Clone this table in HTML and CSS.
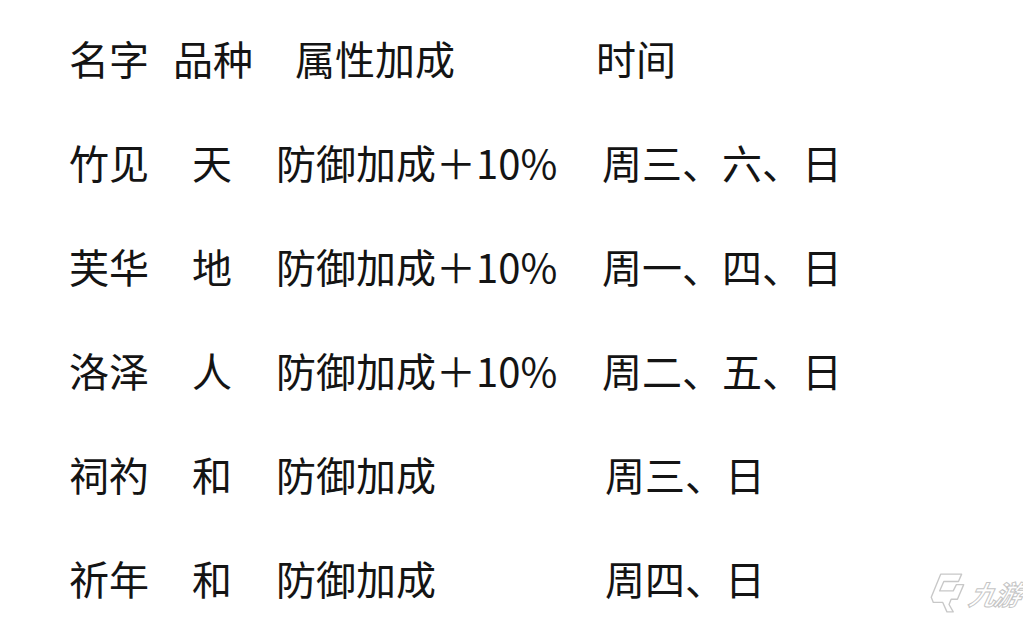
FILE: index.html
```html
<!DOCTYPE html>
<html lang="zh">
<head>
<meta charset="utf-8">
<link rel="stylesheet" href="styles.css">
</head>
<body>
<div class="table">
  <div class="row">
    <span class="c h1">名字</span><span class="c h2">品种</span><span class="c h3">属性加成</span><span class="c">时间</span>
  </div>
  <div class="row">
    <span class="c n">竹见</span><span class="c v">天</span><span class="c a">防御加成＋10%</span><span class="c">周三、六、日</span>
  </div>
  <div class="row">
    <span class="c n">芙华</span><span class="c v">地</span><span class="c a">防御加成＋10%</span><span class="c">周一、四、日</span>
  </div>
  <div class="row">
    <span class="c n">洛泽</span><span class="c v">人</span><span class="c a">防御加成＋10%</span><span class="c">周二、五、日</span>
  </div>
  <div class="row">
    <span class="c n">祠礿</span><span class="c v">和</span><span class="c a2">防御加成</span><span class="c">周三、日</span>
  </div>
  <div class="row">
    <span class="c n">祈年</span><span class="c v">和</span><span class="c a2">防御加成</span><span class="c">周四、日</span>
  </div>
</div>
<div class="logo">
  <svg class="logo-mark" width="36" height="44" viewBox="0 0 34 42">
    <path d="M10 3 L30 3 L27 10 L13 10 L9 19 L22 19 L25 13 L32 13 L26 27 L20 27 L18 32 L22 39 L16 39 L12 30 L3 30 L1 25 Z" fill="none" stroke="#c8c8c8" stroke-width="1.3" stroke-linejoin="round"/>
  </svg>
  <span class="logo-text">九游</span>
</div>
</body>
</html>
```

FILE: styles.css
```css
html, body {
  margin: 0;
  padding: 0;
  background: #ffffff;
}
body {
  width: 1023px;
  height: 623px;
  overflow: hidden;
  position: relative;
  font-family: "Noto Sans CJK SC", "Noto Sans", sans-serif;
  color: #141414;
}
.table {
  padding: 6px 0 0 69px;
  display: flex;
  flex-direction: column;
}
.row {
  display: flex;
  height: 104px;
  line-height: 104px;
  font-size: 40px;
  white-space: nowrap;
}
.c { display: block; }
.h1 { width: 104px; }
.h2 { width: 122px; }
.h3 { width: 301px; }
.n { width: 123px; }
.v { width: 84px; }
.a { width: 326px; }
.a2 { width: 329px; }
.logo {
  position: absolute;
  right: 3px;
  bottom: 8px;
  display: flex;
  align-items: center;
  gap: 4px;
}
.logo-mark { display: block; }
.logo-text {
  font-family: "Noto Sans CJK SC", sans-serif;
  font-size: 27px;
  font-style: italic;
  font-weight: 700;
  color: transparent;
  -webkit-text-stroke: 1px #c4c4c4;
  transform: skewX(-12deg);
  letter-spacing: -2px;
}
```
